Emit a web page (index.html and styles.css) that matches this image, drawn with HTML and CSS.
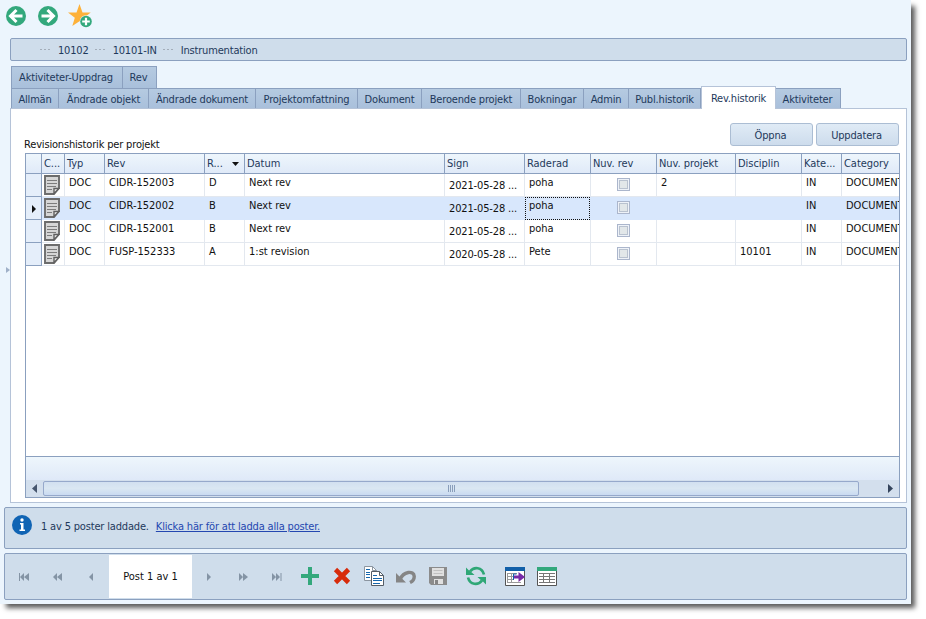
FILE: index.html
```
<!DOCTYPE html>
<html lang="sv">
<head>
<meta charset="utf-8">
<title>Instrumentation</title>
<link rel="stylesheet" href="styles.css">
</head>
<body>
<svg class="defs" width="0" height="0">
  <symbol id="doc" viewBox="0 0 16 20">
    <path d="M1 1h14v12l-5 6H1z" fill="#d6d6d6" stroke="#6c6c6c" stroke-width="1.900"/>
    <path d="M3 5.500h10M3 8.500h10M3 11.500h9M3 14.500h5" stroke="#7c7c7c" stroke-width="1.200"/>
    <path d="M10 18.500v-5h5z" fill="#eee" stroke="#606060" stroke-width="1.400"/>
  </symbol>
</svg>
<div class="window">
  <header class="top-icons">
    <svg width="20" height="20" viewBox="0 0 20 20"><circle cx="10" cy="10" r="10" fill="#33a87c"/><path d="M16.500 10H5M10.500 4L4.500 10l6 6" fill="none" stroke="#fff" stroke-width="3"/></svg>
    <svg width="20" height="20" viewBox="0 0 20 20"><circle cx="10" cy="10" r="10" fill="#33a87c"/><path d="M3.500 10H15M9.500 4l6 6-6 6" fill="none" stroke="#fff" stroke-width="3"/></svg>
    <svg class="star" width="24" height="24" viewBox="0 0 24 24"><path d="M11.500 0l3 8.500h8.200l-6.500 5.200 2.300 8.300-7-4.800-7.200 4.800 2.500-8.300L0 8.500h8.500z" fill="#fdb13a"/><circle cx="18" cy="17.500" r="6.300" fill="#ecf5fd"/><circle cx="18" cy="17.500" r="5.800" fill="#33a87c"/><path d="M18 13.700v7.600M14.200 17.500h7.600" stroke="#fff" stroke-width="2.200"/></svg>
  </header>
  <nav class="crumbs"><i class="dots"></i><span>10102</span><i class="dots"></i><span>10101-IN</span><i class="dots"></i><span class="name">Instrumentation</span></nav>
  <main class="body">
    <aside class="splitter"><svg width="4" height="6" viewBox="0 0 4 6"><path d="M0 0l4 3-4 3z" fill="#9fb0c8"/></svg></aside>
    <section class="content">
      <div class="tabs upper"><div class="tab w111">Aktiviteter-Uppdrag</div><div class="tab w34">Rev</div></div>
      <div class="tabs lower">
        <div class="tab w47">Allmän</div><div class="tab w90">Ändrade objekt</div><div class="tab w107">Ändrade dokument</div><div class="tab w102">Projektomfattning</div><div class="tab w64">Dokument</div><div class="tab w99">Beroende projekt</div><div class="tab w63">Bokningar</div><div class="tab w45">Admin</div><div class="tab w73">Publ.historik</div><div class="tab active">Rev.historik</div><div class="tab w65">Aktiviteter</div>
      </div>
      <div class="panel">
        <div class="panel-head"><h1>Revisionshistorik per projekt</h1><button>Öppna</button><button>Uppdatera</button></div>
        <div class="grid">
          <div class="row head"><div></div><div>C...</div><div>Typ</div><div>Rev</div><div class="sort">R...<svg width="7" height="4" viewBox="0 0 7 4"><path d="M0 0h7L3.500 4z" fill="#111"/></svg></div><div>Datum</div><div>Sign</div><div>Raderad</div><div>Nuv. rev</div><div>Nuv. projekt</div><div>Disciplin</div><div>Kate...</div><div>Category</div></div>
          <div class="row"><div class="ind"></div><div class="ico"><svg width="16" height="20"><use href="#doc"/></svg></div><div>DOC</div><div>CIDR-152003</div><div>D</div><div>Next rev</div><div class="date">2021-05-28 ...</div><div>poha</div><div class="chk"><b></b></div><div>2</div><div></div><div>IN</div><div>DOCUMENT</div></div>
          <div class="row selected"><div class="ind"><svg width="4" height="8" viewBox="0 0 4 8"><path d="M0 0l4 4-4 4z" fill="#111"/></svg></div><div class="ico"><svg width="16" height="20"><use href="#doc"/></svg></div><div>DOC</div><div>CIDR-152002</div><div>B</div><div>Next rev</div><div class="date">2021-05-28 ...</div><div class="focus">poha</div><div class="chk"><b></b></div><div></div><div></div><div>IN</div><div>DOCUMENT</div></div>
          <div class="row"><div class="ind"></div><div class="ico"><svg width="16" height="20"><use href="#doc"/></svg></div><div>DOC</div><div>CIDR-152001</div><div>B</div><div>Next rev</div><div class="date">2021-05-28 ...</div><div>poha</div><div class="chk"><b></b></div><div></div><div></div><div>IN</div><div>DOCUMENT</div></div>
          <div class="row"><div class="ind"></div><div class="ico"><svg width="16" height="20"><use href="#doc"/></svg></div><div>DOC</div><div>FUSP-152333</div><div>A</div><div>1:st revision</div><div class="date">2020-05-28 ...</div><div>Pete</div><div class="chk"><b></b></div><div></div><div>10101</div><div>IN</div><div>DOCUMENT</div></div>
          <div class="empty"></div>
          <div class="summary"></div>
          <div class="scroll">
            <svg width="5" height="9" viewBox="0 0 5 9"><path d="M5 0v9L0 4.500z" fill="#46566e"/></svg>
            <div class="thumb"><i></i></div>
            <svg class="right" width="5" height="9" viewBox="0 0 5 9"><path d="M0 0v9l5-4.500z" fill="#34445c"/></svg>
          </div>
        </div>
      </div>
    </section>
  </main>
  <div class="info">
    <svg width="20" height="20" viewBox="0 0 20 20"><circle cx="10" cy="10" r="10" fill="#1064b4"/><circle cx="10" cy="5" r="1.700" fill="#fff"/><path d="M8 8h3.500v6.500H13V16H7.500v-1.500H9V9.500H8z" fill="#fff"/></svg>
    <span>1 av 5 poster laddade.</span><a href="#">Klicka här för att ladda alla poster.</a>
  </div>
  <footer class="bar">
    <div class="nav">
      <svg width="34" height="45" viewBox="0 0 34 45"><path d="M14 18h1v8h-1zM19 18v8l-4-4zM24 18v8l-5-4z" fill="#8494a5"/></svg><svg width="34" height="45" viewBox="0 0 34 45"><path d="M18 18v8l-4-4zM23 18v8l-5-4z" fill="#8494a5"/></svg><svg width="34" height="45" viewBox="0 0 34 45"><path d="M20 18v8l-4-4z" fill="#8494a5"/></svg>
    </div>
    <div class="post">Post 1 av 1</div>
    <div class="nav after">
      <svg width="34" height="45" viewBox="0 0 34 45"><path d="M15 18v8l4-4z" fill="#8494a5"/></svg><svg width="34" height="45" viewBox="0 0 34 45"><path d="M13 18v8l4-4zM17 18v8l5-4z" fill="#8494a5"/></svg><svg width="34" height="45" viewBox="0 0 34 45"><path d="M12 18v8l4-4zM16 18v8l4-4zM20.500 18h1v8h-1z" fill="#8494a5"/></svg>
    </div>
    <svg class="plus" width="18" height="18" viewBox="0 0 18 18"><path d="M7 0h4v7h7v4h-7v7H7v-7H0V7h7z" fill="#33a87c"/></svg>
    <svg class="del" width="18" height="18" viewBox="0 0 18 18"><path d="M2.500 2.500l13 13M15.500 2.500l-13 13" stroke="#d72b0b" stroke-width="4.600"/></svg>
    <svg class="copy" width="20" height="20" viewBox="0 0 20 20"><path d="M.5.500h8l4 4v10H.5z" fill="#fff" stroke="#8b95a0"/><path d="M8.500.500v4h4" fill="none" stroke="#8b95a0"/><path d="M2 3.500h4M2 6.500h4M2 8.500h4M2 11.500h4" stroke="#1667ad"/><path d="M7.500 5.500h8l4 4v10h-12z" fill="#fff" stroke="#555d66"/><path d="M15.500 5.500v4h4" fill="none" stroke="#555d66"/><path d="M9 9.500h4M9 12.500h9M9 14.500h9M9 17.500h7" stroke="#1667ad"/></svg>
    <svg class="undo" width="20" height="14" viewBox="0 0 20 14"><path d="M4 9.500C7.500 1 17.800 .3 18.200 6.200c.2 3-1.200 4.800-4.200 6.300" fill="none" stroke="#858585" stroke-width="3.400"/><path d="M0 3v9.500h10L6.500 9 3 6z" fill="#858585"/></svg>
    <svg class="save" width="18" height="18" viewBox="0 0 18 18"><path d="M0 0h18v18H2l-2-2z" fill="#8b8b8b"/><path d="M3 1h12v8H3zM5 12h9v5H5z" fill="#e0e0e0"/><path d="M4.500 3.500h9M4.500 6.500h9" stroke="#c0c0c0"/><path d="M6 13h3v4H6z" fill="#858585"/></svg>
    <svg class="sync" width="20" height="20" viewBox="0 0 20 20"><path d="M4 5.500C8 .3 16 1 18 8.500M16 14.500C12 19.700 4 19 2 11.500" fill="none" stroke="#2fa776" stroke-width="2.700"/><path d="M0 1.500V9h8.500L5.500 6.200 3 4.500zM20 18.500V11h-8.500l3 2.800 2.500 1.700z" fill="#2fa776"/></svg>
    <svg class="export" width="20" height="19" viewBox="0 0 20 19"><path d="M.5.500h19v18H.5z" fill="#fff" stroke="#555"/><path d="M0 0h20v4H0z" fill="#125fa8"/><path d="M2 6.500h10M2 9.500h6M2 12.500h6M2 15.500h14M2.500 6v10M6.500 6v10" stroke="#999" fill="none"/><path d="M11.500 7H8.500v6" fill="none" stroke="#125fa8"/><path d="M9 8.500h4.500V5L20 10l-6.500 5v-3.500H9z" fill="#782aa9"/></svg>
    <svg class="table" width="20" height="19" viewBox="0 0 20 19"><path d="M.5.500h19v18H.5z" fill="#fff" stroke="#555"/><path d="M0 0h20v4H0z" fill="#33a87c"/><path d="M2 6.500h16M2 9.500h16M2 12.500h16M2 15.500h16M6.500 6v10M12.500 6v10" stroke="#777"/></svg>
  </footer>
</div>
</body>
</html>
```
FILE: styles.css
```
* { box-sizing: border-box; }
body { margin: 0; background: #fff; width: 926px; height: 619px; overflow: hidden; font: 11px/14px "DejaVu Sans Condensed", "DejaVu Sans", sans-serif; font-stretch: condensed; letter-spacing: -0.17px; color: #1e395b; }
svg { display: block; flex: none; }
.defs { position: absolute; }
.window { width: 911px; height: 604px; background: #ecf5fd; display: flex; flex-direction: column; box-shadow: 5px 5px 5px -1px rgba(0,0,0,.65); }
.top-icons { height: 38px; padding: 6px 0 0 6px; display: flex; gap: 12px; flex: none; }
.star { margin: -2px 0 0 -2px; }
.crumbs { height: 23px; flex: none; margin: 0 4px 0 10px; border: 1px solid #8ba0bf; border-radius: 2px; background: #cfddeb; display: flex; align-items: center; padding-left: 29px; }
.dots { width: 11px; height: 1px; background: repeating-linear-gradient(90deg, #a3adb9 0 2px, transparent 2px 4px); margin-right: 7px; }
.crumbs span { margin-right: 6px; padding-top: 2px; }
.body { display: flex; height: 442px; flex: none; }
.splitter { width: 10px; padding: 206px 0 0 6px; }
.content { width: 897px; padding-top: 5px; }
.tabs { display: flex; padding-left: 1px; }
.tab { height: 22px; border: 1px solid #8ba0bf; border-width: 1px 1px 0 0; background: linear-gradient(#b5cae1, #a9c0db); text-align: center; line-height: 21px; white-space: nowrap; }
.upper .tab { padding-right: 2px; }
.tab:first-child { border-left-width: 1px; }
.lower .tab { height: 20px; line-height: 21px; }
.lower .active { height: 23px; width: 75px; margin: -2px -1px -1px 0; background: #fff; border-color: #b5c3d8; position: relative; border-left-width: 1px; line-height: 23px; }
.w111 { width: 112px; } .w34 { width: 34px; }
.w47 { width: 48px; } .w90 { width: 90px; } .w107 { width: 107px; } .w102 { width: 102px; }
.w64 { width: 64px; } .w99 { width: 99px; } .w63 { width: 63px; } .w45 { width: 45px; } .w73 { width: 72px; } .w65 { width: 66px; }
.lower { height: 20px; }
.panel { height: 395px; background: #fff; border: 1px solid #b5c3d8; padding: 14px 6px 0 14px; }
.panel-head { display: flex; height: 30px; gap: 3px; padding-right: 1px; }
h1 { margin: 15px auto 0 -1px; font: inherit; color: #111; }
button { font: inherit; letter-spacing: inherit; color: inherit; width: 83px; height: 23px; border: 1px solid #abbdd3; border-radius: 3px; background: linear-gradient(#e0ebf6, #cddcec); padding: 2px 2px 0 0; }
.grid { width: 875px; height: 345px; border: 1px solid #8ba0bf; display: flex; flex-direction: column; }
.row { display: grid; grid-template-columns: 16px 23px 40px 100px 40px 200px 80px 66px 66px 79px 66px 40px 57px; height: 23px; color: #111; flex: none; letter-spacing: 0; }
.row > div { border: 0 solid #e3e8ef; border-width: 0 1px 1px 0; padding: 2px 0 0 4px; overflow: hidden; white-space: nowrap; }
.row > div:last-child { border-right: 0; }
.row.head { height: 20px; color: #1e395b; background: linear-gradient(#eef6fc, #dfe9f8); letter-spacing: -0.04px; }
.head > div { border-color: #8ba0bf; padding: 3px 0 0 2px; }
.head .sort { display: flex; justify-content: space-between; padding-right: 5px; }
.sort svg { margin-top: 5px; }
.row .ind { background: #e5eefa; border-color: #8ba0bf; padding: 8px 0 0 6px; }
.row .ico { padding: 1px 0 0 2px; }
.row .date { padding-top: 5px; letter-spacing: -0.14px; }
.row .chk { padding: 4px 0 0 26px; }
.chk b { display: block; width: 13px; height: 13px; border: 1px solid #abb6cc; background: #e2e7e9; box-shadow: inset 0 0 0 1px #eef2f8, inset 0 0 0 2px #b9c2cf; }
.row.selected { background: #d8e7fc; }
.selected > div { border-color: #d8e7fc; }
.row .focus { border: 1px dotted #111; padding: 1px 0 0 3px; margin-right: 1px; }
.empty { flex: 1; }
.summary { height: 24px; border-top: 1px solid #8ba0bf; background: linear-gradient(#eef6fc, #dfe9f8); }
.scroll { height: 17px; background: #d3dfed; display: flex; align-items: center; padding: 0 6px; }
.thumb { width: 816px; height: 15px; margin-left: 6px; border: 1px solid #96a9cb; border-radius: 2px; background: linear-gradient(#d2e0f0, #dae7f2 50%, #c9daf1); display: flex; align-items: center; justify-content: center; }
.thumb i { width: 7px; height: 7px; background: repeating-linear-gradient(90deg, #899ebb 0 1px, transparent 1px 2px); }
.right { margin-left: auto; }
.info, .bar { margin: 4px 4px 0; border: 1px solid #8ba0bf; border-radius: 2px; background: #cfddeb; width: 903px; display: flex; flex: none; }
.info { height: 42px; padding: 7px 0 0 7px; }
.info span { margin: 5px 7px 0 9px; }
a { color: #2447b0; margin-top: 5px; text-decoration: underline; }
.bar { height: 47px; padding: 1px 0 0; align-items: flex-start; }
.nav { display: flex; width: 104px; }
.post { width: 83px; height: 43px; background: #fff; text-align: center; line-height: 44px; color: #111; letter-spacing: 0; }
.plus { margin: 12px 0 0 109px; }
.after { width: 0; }
.del { margin: 12px 0 0 14px; }
.copy { margin: 11px 0 0 13px; }
.undo { margin: 15px 0 0 12px; }
.save { margin: 12px 0 0 13px; }
.sync { margin: 11px 0 0 19px; }
.export { margin: 12px 0 0 19px; }
.table { margin: 12px 0 0 12px; }
```
